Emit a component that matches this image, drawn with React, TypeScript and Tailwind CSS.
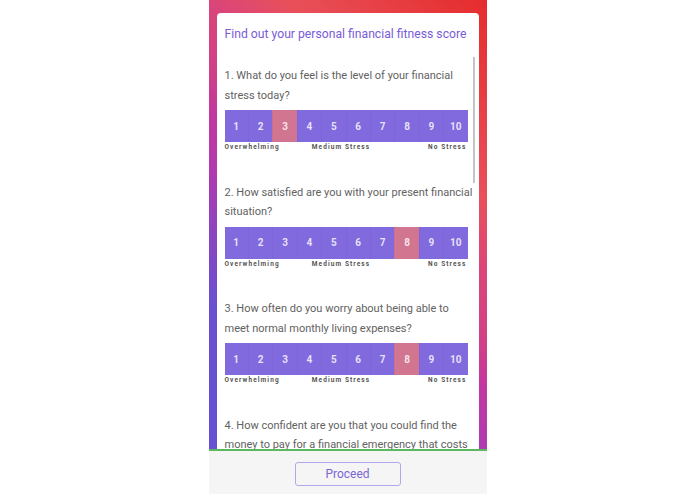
import React from "react";

const questions = [
  { q: "1. What do you feel is the level of your financial stress today?", sel: 3 },
  { q: "2. How satisfied are you with your present financial situation?", sel: 8 },
  { q: "3. How often do you worry about being able to meet normal monthly living expenses?", sel: 8 },
  { q: "4. How confident are you that you could find the money to pay for a financial emergency that costs about $1,000?", sel: 0 },
];

function Scale({ sel }: { sel: number }) {
  return (
    <div>
      <div className="mt-[5px] flex h-[32px] w-[243px]">
        {[1, 2, 3, 4, 5, 6, 7, 8, 9, 10].map((n) => (
          <div
            key={n}
            className={
              "flex flex-1 items-center justify-center border-l border-[rgba(60,40,140,0.06)] text-[10px] font-bold text-[rgba(255,255,255,0.82)] first:border-l-0 " +
              (n === sel ? "bg-[#d27591]" : "bg-[#8169de]")
            }
          >
            {n}
          </div>
        ))}
      </div>
      <div className="flex w-[243px] text-[6.5px] font-bold leading-[10px] tracking-[1.1px] text-[#555]">
        <span>Overwhelming</span>
        <span className="ml-[32px]">Medium Stress</span>
        <span className="ml-auto pr-[1px]">No Stress</span>
      </div>
    </div>
  );
}

export default function App() {
  return (
    <div
      className="flex h-[494px] w-full justify-center bg-white"
      style={{ fontFamily: "Roboto, 'Noto Sans', sans-serif" }}
    >
      <div className="flex h-full w-[278px] flex-col bg-[linear-gradient(45deg,#6450d6_0%,#6a50d0_25%,#8a45c0_34%,#b03ab0_42%,#c2389e_50%,#d04088_55%,#da457a_64%,#e8505a_74%,#e52c2c_100%)]">
        <div className="min-h-0 flex-1 overflow-hidden px-2 pt-[13px]">
          <div className="relative h-full rounded-t-[4px] bg-white">
            <div className="whitespace-nowrap px-2 pt-[13px] text-[12.2px] leading-[16px] text-[#7a5cd8]">
              Find out your personal financial fitness score
            </div>
            <div className="pl-2 pr-[3px] pt-[24px]">
              {questions.map((item, i) => (
                <div key={i} className="mb-[30.5px]">
                  <div className="text-[11px] leading-[19.5px] text-[#626262]">{item.q}</div>
                  <Scale sel={item.sel} />
                </div>
              ))}
            </div>
            <div className="absolute left-[256px] top-[44px] h-[126px] w-[2px] bg-[#c4c4c4]" />
          </div>
        </div>
        <div className="flex h-[45px] shrink-0 items-center justify-center border-t-2 border-[#5cb85c] bg-[#f5f5f5]">
          <button className="mt-[2px] h-[24px] w-[106px] rounded-[3px] border border-[#b3a7ea] text-[12px] leading-[22px] text-[#7c66d6]">
            Proceed
          </button>
        </div>
      </div>
    </div>
  );
}
